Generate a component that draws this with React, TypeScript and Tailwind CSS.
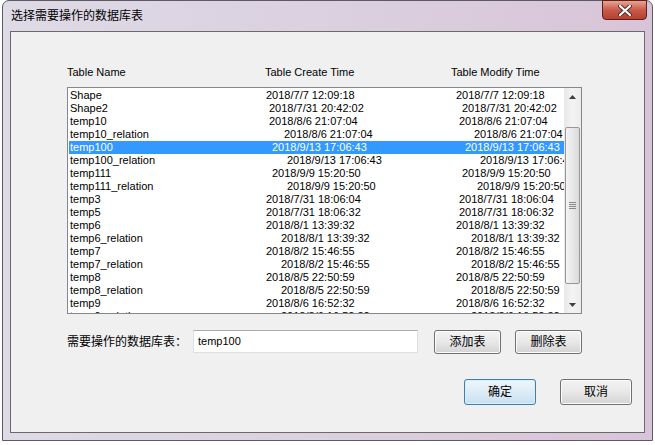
import React from "react";

const rows = [
  { name: "Shape", created: "2018/7/7 12:09:18", modified: "2018/7/7 12:09:18", cPad: "pl-0", mPad: "pl-0" },
  { name: "Shape2", created: "2018/7/31 20:42:02", modified: "2018/7/31 20:42:02", cPad: "pl-[3px]", mPad: "pl-[6px]" },
  { name: "temp10", created: "2018/8/6 21:07:04", modified: "2018/8/6 21:07:04", cPad: "pl-[3px]", mPad: "pl-[3px]" },
  { name: "temp10_relation", created: "2018/8/6 21:07:04", modified: "2018/8/6 21:07:04", cPad: "pl-[18px]", mPad: "pl-[18px]" },
  { name: "temp100", created: "2018/9/13 17:06:43", modified: "2018/9/13 17:06:43", cPad: "pl-[6px]", mPad: "pl-[9px]", selected: true },
  { name: "temp100_relation", created: "2018/9/13 17:06:43", modified: "2018/9/13 17:06:43", cPad: "pl-[21px]", mPad: "pl-[24px]" },
  { name: "temp111", created: "2018/9/9 15:20:50", modified: "2018/9/9 15:20:50", cPad: "pl-[6px]", mPad: "pl-[6px]" },
  { name: "temp111_relation", created: "2018/9/9 15:20:50", modified: "2018/9/9 15:20:50", cPad: "pl-[21px]", mPad: "pl-[21px]" },
  { name: "temp3", created: "2018/7/31 18:06:04", modified: "2018/7/31 18:06:04", cPad: "pl-0", mPad: "pl-[3px]" },
  { name: "temp5", created: "2018/7/31 18:06:32", modified: "2018/7/31 18:06:32", cPad: "pl-0", mPad: "pl-[3px]" },
  { name: "temp6", created: "2018/8/1 13:39:32", modified: "2018/8/1 13:39:32", cPad: "pl-0", mPad: "pl-0" },
  { name: "temp6_relation", created: "2018/8/1 13:39:32", modified: "2018/8/1 13:39:32", cPad: "pl-[15px]", mPad: "pl-[15px]" },
  { name: "temp7", created: "2018/8/2 15:46:55", modified: "2018/8/2 15:46:55", cPad: "pl-0", mPad: "pl-0" },
  { name: "temp7_relation", created: "2018/8/2 15:46:55", modified: "2018/8/2 15:46:55", cPad: "pl-[15px]", mPad: "pl-[15px]" },
  { name: "temp8", created: "2018/8/5 22:50:59", modified: "2018/8/5 22:50:59", cPad: "pl-0", mPad: "pl-0" },
  { name: "temp8_relation", created: "2018/8/5 22:50:59", modified: "2018/8/5 22:50:59", cPad: "pl-[15px]", mPad: "pl-[15px]" },
  { name: "temp9", created: "2018/8/6 16:52:32", modified: "2018/8/6 16:52:32", cPad: "pl-0", mPad: "pl-0" },
  { name: "temp9_relation", created: "2018/8/6 16:52:32", modified: "2018/8/6 16:52:32", cPad: "pl-[15px]", mPad: "pl-[15px]" },
];

function WinButton({ label, primary, className }: any) {
  return (
    <div
      className={`flex items-center justify-center rounded-[3px] border text-[12px] text-black ${
        primary
          ? "border-[#3c7fb1] bg-linear-to-b from-[#eef6fb] via-[#dcecf6] to-[#c6dfef] shadow-[inset_0_0_0_1px_#d9f0fc]"
          : "border-[#707070] bg-linear-to-b from-[#f3f3f3] via-[#e8e8e8] to-[#d3d3d3] shadow-[inset_0_0_0_1px_#fcfcfc]"
      } ${className}`}
    >
      {label}
    </div>
  );
}

function ScrollBar() {
  return (
    <div className="flex w-[17px] flex-col bg-linear-to-r from-[#e8e8e8] via-[#f4f4f4] to-[#ececec]">
      <div className="flex h-[17px] items-center justify-center">
        <svg width="7" height="4" viewBox="0 0 7 4">
          <path d="M0 4 L3.5 0 L7 4 Z" fill="#404040" />
        </svg>
      </div>
      <div className="flex flex-1 flex-col px-[1px] pt-[22px] pb-[12px]">
        <div className="flex h-[157px] items-center justify-center rounded-[2px] border border-[#979797] bg-linear-to-r from-[#f4f4f4] to-[#dadada]">
          <div className="flex flex-col gap-[1px]">
            <div className="h-[1px] w-[7px] bg-[#8a8a8a]" />
            <div className="h-[1px] w-[7px] bg-[#8a8a8a]" />
            <div className="h-[1px] w-[7px] bg-[#8a8a8a]" />
            <div className="h-[1px] w-[7px] bg-[#8a8a8a]" />
          </div>
        </div>
      </div>
      <div className="flex h-[17px] items-center justify-center">
        <svg width="7" height="4" viewBox="0 0 7 4">
          <path d="M0 0 L7 0 L3.5 4 Z" fill="#404040" />
        </svg>
      </div>
    </div>
  );
}

export default function App() {
  return (
    <div className="h-[445px] w-[655px] overflow-hidden bg-white font-['Liberation_Sans','Noto_Sans_CJK_SC',sans-serif]">
      <div className="ml-[2px] flex h-[441px] w-[651px] flex-col rounded-t-[7px] border border-[#5d5a66] bg-linear-to-r from-[#dedae6] via-[#dbd0e0] to-[#d8c4d8] px-[7px] pb-[7px]">
        <div className="relative flex h-[30px] items-center pl-[1px]">
          <span className="text-[12px] text-black">选择需要操作的数据库表</span>
          <div className="absolute top-[-1px] right-[-2px] flex h-[20px] w-[45px] items-center justify-center rounded-b-[4px] border border-[#5a2020] bg-linear-to-b from-[#e8a394] via-[#c75a4a] to-[#b8402e]">
            <svg width="14" height="11" viewBox="0 0 14 11">
              <path d="M2 1 L12 10 M12 1 L2 10" stroke="#4a2a2a" strokeWidth="4" strokeLinecap="round" />
              <path d="M2 1 L12 10 M12 1 L2 10" stroke="#ffffff" strokeWidth="2.2" strokeLinecap="round" />
            </svg>
          </div>
        </div>
        <div className="flex flex-1 flex-col border border-[#6a6a6a] bg-[#f0f0f0] pl-[56px]">
          <div className="mt-[33px] flex h-[14px] items-center text-[11px] text-black">
            <span className="w-[198px]">Table Name</span>
            <span className="w-[186px]">Table Create Time</span>
            <span>Table Modify Time</span>
          </div>
          <div className="mt-[8px] flex h-[227px] w-[515px] border border-[#828790] bg-white">
            <div className="flex-1 overflow-hidden pt-[1px] pl-[1px] text-[11px] leading-[13px] text-black">
              {rows.map((r) => (
                <div
                  key={r.name}
                  className={`flex h-[13px] whitespace-nowrap ${r.selected ? "bg-[#3399ff] text-white" : ""}`}
                >
                  <span className="w-[197px] shrink-0 pl-[1px]">{r.name}</span>
                  <span className={`w-[190px] shrink-0 ${r.cPad}`}>{r.created}</span>
                  <span className={`shrink-0 ${r.mPad}`}>{r.modified}</span>
                </div>
              ))}
            </div>
            <ScrollBar />
          </div>
          <div className="mt-[16px] flex h-[23px] items-center">
            <span className="w-[126px] text-[12px] text-black">需要操作的数据库表：</span>
            <div className="flex h-[23px] w-[225px] items-center border border-[#dbdfe6] border-t-[#abadb3] bg-white pl-[4px] text-[11px] text-black">
              temp100
            </div>
            <WinButton label="添加表" className="ml-[16px] h-[24px] w-[67px]" />
            <WinButton label="删除表" className="ml-[14px] h-[24px] w-[67px]" />
          </div>
          <div className="mt-[26px] flex justify-end pr-[12px]">
            <WinButton label="确定" primary className="h-[26px] w-[72px]" />
            <WinButton label="取消" className="ml-[24px] h-[26px] w-[72px]" />
          </div>
        </div>
      </div>
    </div>
  );
}
